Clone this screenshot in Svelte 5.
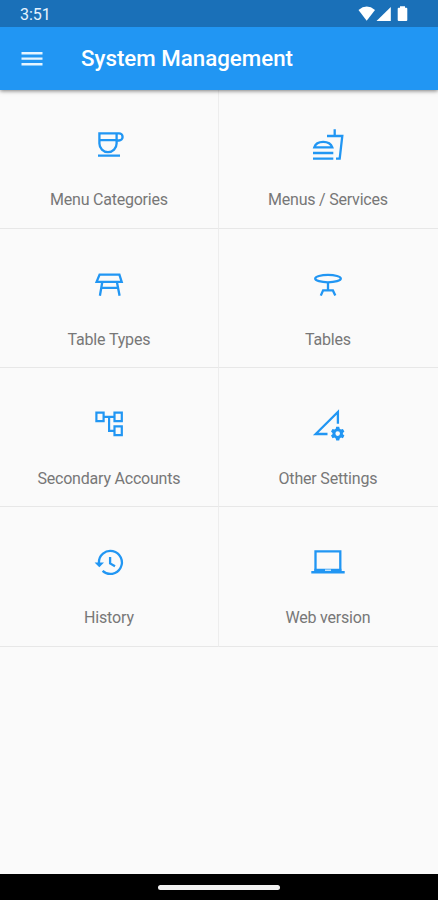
<script lang="ts">
  const items = [
    { icon: 'cup', label: 'Menu Categories', width: 118 },
    { icon: 'food', label: 'Menus / Services', width: 120 },
    { icon: 'bench', label: 'Table Types', width: 83 },
    { icon: 'table', label: 'Tables', width: 46 },
    { icon: 'tree', label: 'Secondary Accounts', width: 143 },
    { icon: 'settings', label: 'Other Settings', width: 99 },
    { icon: 'history', label: 'History', width: 50 },
    { icon: 'laptop', label: 'Web version', width: 85 },
  ]
</script>

<div class="screen">
  <div class="status">
    <span class="time">3:51</span>
    <svg width="52" height="18" viewBox="0 0 52 18" fill="#fff">
      <path d="M0.5 5Q8.7 -1.8 17 5L8.7 15.7z" />
      <path d="M32.8 2V16H18.5z" />
      <path
        d="M42 1.2h5v1.6h1.3q1 0 1 1v11.2q0 1-1 1h-7.6q-1 0-1-1v-11.2q0-1 1-1H42z"
      />
    </svg>
  </div>
  <header>
    <button class="menu-button" aria-label="Menu">
      <svg width="22" height="16" viewBox="0 0 22 16" fill="#e6f5ff">
        <path d="M0.5 1h21v2.4h-21zM0.5 6.4h21v2.4h-21zM0.5 12h21v2.4h-21z" />
      </svg>
    </button>
    <h1>System Management</h1>
  </header>
  <main>
    {#each items as item}
      <button class="cell">
        <svg
          class="icon"
          width="36"
          height="36"
          viewBox="0 0 36 36"
          fill="none"
          stroke="currentColor"
          stroke-width="2.3"
        >
          {#if item.icon === 'cup'}
            <path
              d="M8.4 6.3H28a3.6 3.6 0 0 1 0 7.2H25.5M8.4 5.3V16.5a8.6 8.6 0 0 0 17.2 0V6.3M8.4 13.2H25.5M7 28.7H29"
            />
          {:else if item.icon === 'food'}
            <path
              d="M24.7 2.3V9M17 9H32.3L29.7 31.7H26M3 26H23.3M3 31.7H23.3M4.3 20.3Q6 14.8 13.2 14.8T22.3 20.3z"
            />
          {:else if item.icon === 'bench'}
            <path
              d="M8.6 7.6H28.4L30.7 14.9H5.6zM11.3 15L8.9 28.8M25.9 15L28.6 28.8M10.5 20.8H27"
            />
          {:else if item.icon === 'table'}
            <ellipse cx="18" cy="11.6" rx="12.8" ry="3.7" />
            <path d="M18 15.3V23.4M10.8 28.6L13.1 23.4H22.9L25.3 28.6" />
          {:else if item.icon === 'tree'}
            <path
              stroke-width="2.2"
              d="M5.4 6.6h7.2v8.6H5.4zM23.5 6.6h7.3v8.6h-7.3zM23.5 20.3h7.3v8.8h-7.3zM12.6 10.8H23.5M18.1 10.8V24.9H23.5"
            />
          {:else if item.icon === 'settings'}
            <path d="M17.5 28H5.7L27.9 6V17.8" />
            <g transform="translate(27.7 27.6)" stroke="none" fill="currentColor">
              <path
                fill-rule="evenodd"
                d="M-1.5 -6.8H1.5L2 -4.8L3.3 -4L5.2 -4.6L6.7 -2L5.2 -.7V.7L6.7 2L5.2 4.6L3.3 4L2 4.8L1.5 6.8H-1.5L-2 4.8L-3.3 4L-5.2 4.6L-6.7 2L-5.2 .7V-.7L-6.7 -2L-5.2 -4.6L-3.3 -4L-2 -4.8zM0 -2.3a2.3 2.3 0 1 0 0 4.6a2.3 2.3 0 1 0 0 -4.6z"
              />
            </g>
          {:else if item.icon === 'history'}
            <path d="M7.9 18A11.5 11.5 0 1 1 11.6 25.9M19.1 12V18.4L24 21.3" />
            <path d="M3.6 17.5H13L8.3 22.3z" fill="currentColor" stroke="none" />
          {:else}
            <path d="M5.5 6.3H30.3V25.2H5.5z" />
            <path
              d="M1.3 26H34.7V28.6H1.3zM4.4 23.8H31.4V26H4.4z"
              fill="currentColor"
              stroke="none"
            />
            <path d="M15 25.2h6" stroke="#e3f2fd" stroke-width="1.3" />
          {/if}
        </svg>
        <svg class="label" width="200" height="24">
          <text
            x="100"
            y="17"
            text-anchor="middle"
            textLength={item.width}>{item.label}</text
          >
        </svg>
      </button>
    {/each}
  </main>
  <footer><div class="handle"></div></footer>
</div>

<style>
  :global(body) {
    margin: 0;
  }
  .screen {
    display: flex;
    flex-direction: column;
    height: 900px;
    background-color: #fafafa;
    font-family: Roboto, sans-serif;
  }
  .status {
    z-index: 2;
    box-sizing: border-box;
    display: flex;
    justify-content: space-between;
    height: 27px;
    padding: 5px 28px 0 20px;
    background-color: #1a70b8;
    color: #e6f3ff;
  }
  .time {
    font-size: 16px;
    line-height: 19px;
  }
  header {
    z-index: 1;
    display: flex;
    align-items: center;
    height: 63px;
    padding-left: 21px;
    background-color: #2196f3;
    box-shadow: 0 1px 4px rgba(0, 0, 0, 0.5);
  }
  button {
    padding: 0;
    border: 0;
    background: none;
    font: inherit;
  }
  .menu-button {
    display: flex;
    width: 22px;
    margin-right: 38px;
  }
  h1 {
    margin: 0 0 1px;
    color: #fff;
    font-size: 22.3px;
    font-weight: 500;
    white-space: nowrap;
  }
  main {
    display: grid;
    grid-template-columns: 219px 219px;
    grid-auto-rows: 139.3px;
    flex: 1;
    align-content: start;
    margin-top: -0.6px;
  }
  .cell {
    box-sizing: border-box;
    display: flex;
    flex-direction: column;
    align-items: center;
    justify-content: flex-start;
    padding-top: 37.8px;
    border-bottom: 1px solid #e7e7e7;
  }
  .cell:nth-child(odd) {
    border-right: 1px solid #ededed;
  }
  .cell:nth-child(even) {
    padding-right: 2px;
  }
  .icon {
    color: #2196f3;
  }
  .label {
    margin-top: 25px;
    fill: #777;
    font-size: 16px;
  }
  footer {
    display: flex;
    justify-content: center;
    height: 26px;
    background-color: #000;
  }
  .handle {
    width: 122px;
    height: 5px;
    margin-top: 10.5px;
    border-radius: 3px;
    background-color: #f2f2f2;
  }
</style>
